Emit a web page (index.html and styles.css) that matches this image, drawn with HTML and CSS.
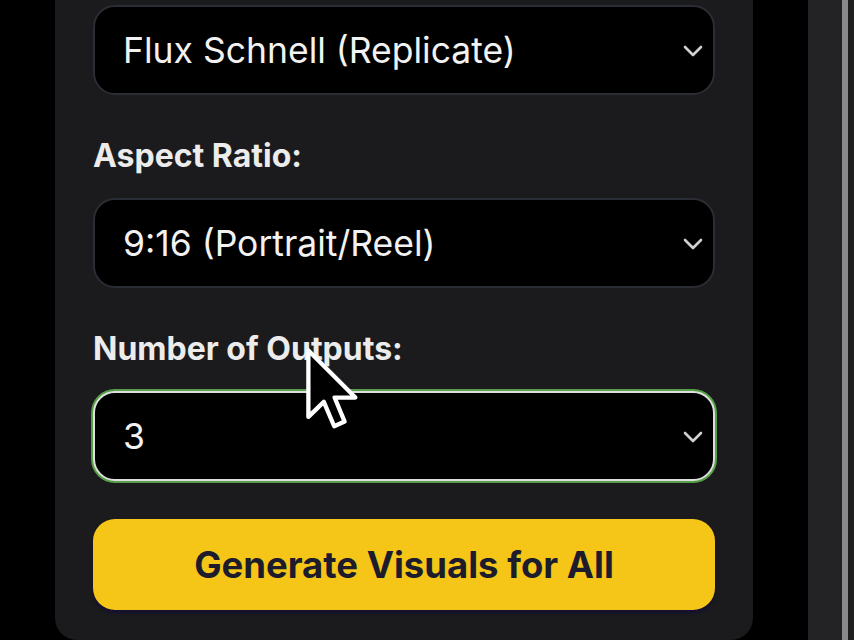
FILE: index.html
```html
<!DOCTYPE html>
<html lang="en">
<head>
<meta charset="utf-8">
<title>Visual Generation Settings</title>
<link rel="stylesheet" href="styles.css">
</head>
<body>
<div class="screen">
  <div class="gutter"></div>
  <section class="panel">
    <div class="field first">
      <div class="select">
        <span class="value">Flux Schnell (Replicate)</span>
        <svg class="chev" viewBox="0 0 20 12" width="20" height="12"><path d="M2 2 L10 10 L18 2" fill="none" stroke="#d0d0d0" stroke-width="2.6" stroke-linecap="round" stroke-linejoin="round"/></svg>
      </div>
    </div>
    <div class="field">
      <label class="label">Aspect Ratio:</label>
      <div class="select">
        <span class="value">9:16 (Portrait/Reel)</span>
        <svg class="chev" viewBox="0 0 20 12" width="20" height="12"><path d="M2 2 L10 10 L18 2" fill="none" stroke="#d0d0d0" stroke-width="2.6" stroke-linecap="round" stroke-linejoin="round"/></svg>
      </div>
    </div>
    <div class="field">
      <label class="label">Number of Outputs:</label>
      <div class="select focused">
        <span class="value">3</span>
        <svg class="chev" viewBox="0 0 20 12" width="20" height="12"><path d="M2 2 L10 10 L18 2" fill="none" stroke="#d0d0d0" stroke-width="2.6" stroke-linecap="round" stroke-linejoin="round"/></svg>
      </div>
    </div>
    <button class="generate">Generate Visuals for All</button>
  </section>
  <div class="gap"></div>
  <div class="strip"></div>
  <div class="line"></div>
  <div class="edge"></div>
</div>
<svg class="cursor" viewBox="0 0 17 25" width="61" height="90">
  <path d="M1.5 1.5 L1.5 20 L5.8 15.8 L8.7 22.6 L11.6 21.3 L8.8 14.6 L14.6 14.6 Z" fill="#000" stroke="#fff" stroke-width="1.2" stroke-linejoin="round"/>
</svg>
</body>
</html>
```
FILE: styles.css
```css
html, body {
  margin: 0;
  padding: 0;
  background: #000;
  height: 640px;
  overflow: hidden;
}
body {
  position: relative;
  font-family: Inter, "Liberation Sans", sans-serif;
}
.screen {
  display: flex;
  height: 640px;
}
.gutter {
  width: 55px;
  flex: none;
}
.panel {
  width: 698px;
  flex: none;
  box-sizing: border-box;
  background: #1b1b1d;
  border-radius: 0 0 22px 22px;
  padding: 5px 38px 0 38px;
  display: flex;
  flex-direction: column;
}
.field {
  display: flex;
  flex-direction: column;
}
.field + .field {
  margin-top: 42px;
}
.label {
  display: block;
  color: #ececec;
  font-size: 32px;
  font-weight: 700;
  line-height: 38px;
  margin-bottom: 23px;
}
.select {
  height: 90px;
  box-sizing: border-box;
  background: #000;
  border: 2px solid #2a2d35;
  border-radius: 22px;
  padding: 0 10px 0 28px;
  display: flex;
  align-items: center;
  justify-content: space-between;
}
.select.focused {
  border-color: #dedede;
  box-shadow: 0 0 0 2px rgba(110, 205, 85, 0.75);
}
.value {
  color: #f2f2f2;
  font-size: 35.5px;
  font-weight: 400;
}
.chev {
  flex: none;
  margin-top: 2px;
}
.generate {
  margin-top: 38px;
  height: 91px;
  border: none;
  border-radius: 22px;
  background: #f5c518;
  color: #1c1c2c;
  font-family: Inter, "Liberation Sans", sans-serif;
  font-size: 36.5px;
  font-weight: 700;
  box-shadow: 0 3px 3px rgba(20, 16, 50, 0.95);
}
.gap {
  width: 55px;
  flex: none;
}
.strip {
  width: 34px;
  flex: none;
  background: #232325;
}
.line {
  width: 6px;
  flex: none;
  background: #8a8a8a;
}
.edge {
  flex: 1;
  background: #1f1f21;
}
.cursor {
  position: absolute;
  left: 303px;
  top: 345px;
}
```
